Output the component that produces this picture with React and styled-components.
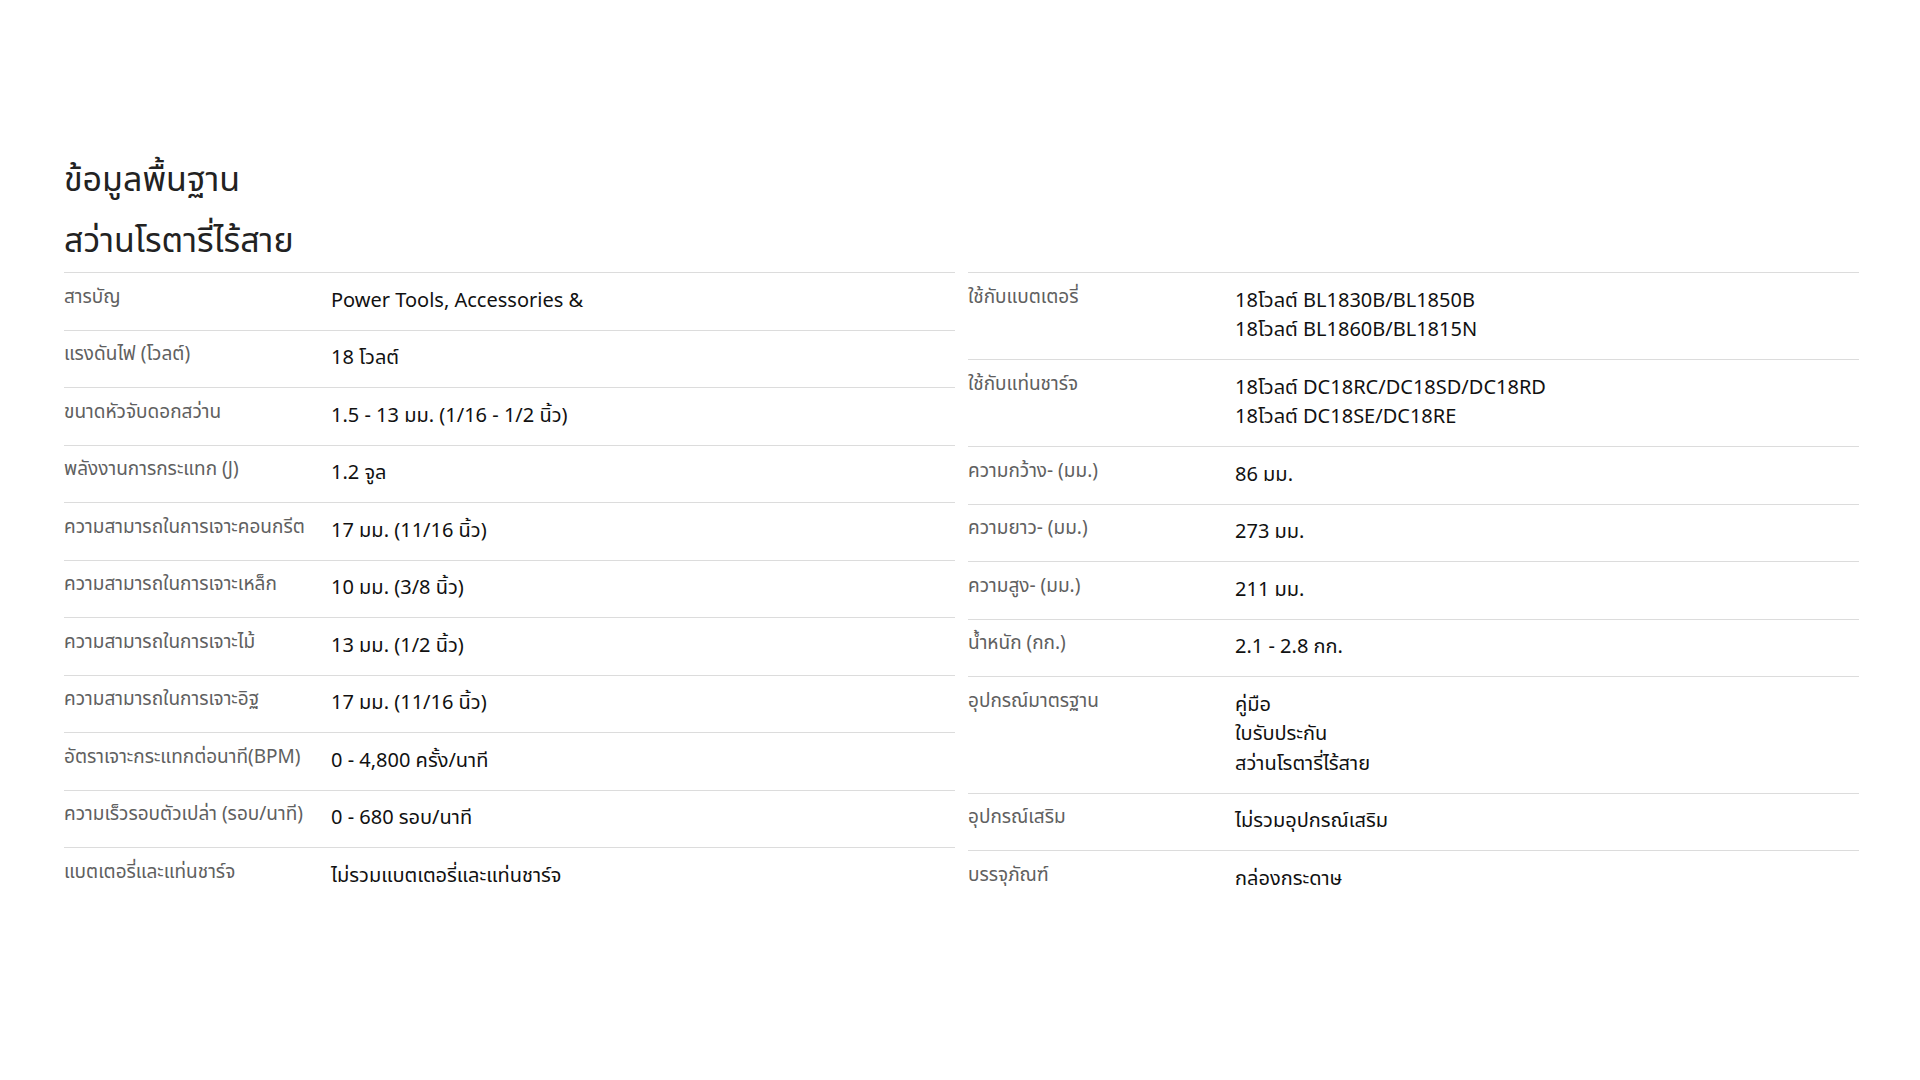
import styled, { createGlobalStyle } from "styled-components";

const GlobalStyle = createGlobalStyle`
  body {
    margin: 0;
    background: #fff;
    font-family: "Noto Sans Thai", "Noto Sans", sans-serif;
    color: #111;
  }
`;

const leftRows = [
  ["สารบัญ", ["Power Tools, Accessories &"]],
  ["แรงดันไฟ (โวลต์)", ["18 โวลต์"]],
  ["ขนาดหัวจับดอกสว่าน", ["1.5 - 13 มม. (1/16 - 1/2 นิ้ว)"]],
  ["พลังงานการกระแทก (J)", ["1.2 จูล"]],
  ["ความสามารถในการเจาะคอนกรีต", ["17 มม. (11/16 นิ้ว)"]],
  ["ความสามารถในการเจาะเหล็ก", ["10 มม. (3/8 นิ้ว)"]],
  ["ความสามารถในการเจาะไม้", ["13 มม. (1/2 นิ้ว)"]],
  ["ความสามารถในการเจาะอิฐ", ["17 มม. (11/16 นิ้ว)"]],
  ["อัตราเจาะกระแทกต่อนาที(BPM)", ["0 - 4,800 ครั้ง/นาที"]],
  ["ความเร็วรอบตัวเปล่า (รอบ/นาที)", ["0 - 680 รอบ/นาที"]],
  ["แบตเตอรี่และแท่นชาร์จ", ["ไม่รวมแบตเตอรี่และแท่นชาร์จ"]],
];

const rightRows = [
  ["ใช้กับแบตเตอรี่", ["18โวลต์ BL1830B/BL1850B", "18โวลต์ BL1860B/BL1815N"]],
  ["ใช้กับแท่นชาร์จ", ["18โวลต์ DC18RC/DC18SD/DC18RD", "18โวลต์ DC18SE/DC18RE"]],
  ["ความกว้าง- (มม.)", ["86 มม."]],
  ["ความยาว- (มม.)", ["273 มม."]],
  ["ความสูง- (มม.)", ["211 มม."]],
  ["น้ำหนัก (กก.)", ["2.1 - 2.8 กก."]],
  ["อุปกรณ์มาตรฐาน", ["คู่มือ", "ใบรับประกัน", "สว่านโรตารี่ไร้สาย"]],
  ["อุปกรณ์เสริม", ["ไม่รวมอุปกรณ์เสริม"]],
  ["บรรจุภัณฑ์", ["กล่องกระดาษ"]],
];

const Page = styled.div`
  padding: 150px 61px 120px 64px;
`;

const Title = styled.h2`
  margin: 0;
  font-size: 34px;
  font-weight: 400;
  line-height: 61px;
  color: #222;
`;

const SpecGrid = styled.div`
  display: grid;
  grid-template-columns: 1fr 1fr;
  column-gap: 13px;
`;

const Column = styled.div`
  display: flex;
  flex-direction: column;
`;

const Row = styled.div`
  display: grid;
  grid-template-columns: 267px 1fr;
  padding: 13.5px 0;
  border-top: 1px solid #dcdcdc;
`;

const Label = styled.div`
  font-size: 19px;
  line-height: 21px;
  color: #606060;
`;

const Value = styled.div`
  font-size: 20px;
  line-height: 29.5px;
  color: #111;
`;

const SpecColumn = ({ rows }) => (
  <Column>
    {rows.map(([label, values]) => (
      <Row key={label}>
        <Label>{label}</Label>
        <div>
          {values.map((v) => (
            <Value key={v}>{v}</Value>
          ))}
        </div>
      </Row>
    ))}
  </Column>
);

const App = () => (
  <>
    <GlobalStyle />
    <Page>
      <Title>ข้อมูลพื้นฐาน</Title>
      <Title>สว่านโรตารี่ไร้สาย</Title>
      <SpecGrid>
        <SpecColumn rows={leftRows} />
        <SpecColumn rows={rightRows} />
      </SpecGrid>
    </Page>
  </>
);

export default App;
